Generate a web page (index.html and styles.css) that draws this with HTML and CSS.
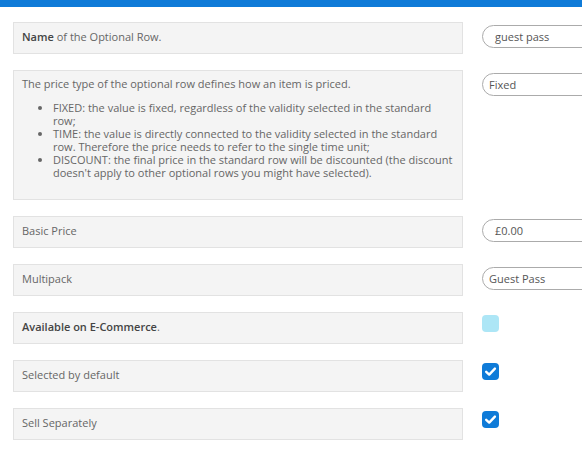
FILE: index.html
```
<!DOCTYPE html>
<html>
<head>
<meta charset="utf-8">
<link rel="stylesheet" href="styles.css">
</head>
<body>
<div class="topbar"></div>
<div class="form">
  <div class="row">
    <div class="label"><b>Name</b> of the Optional Row.</div>
    <div class="field"><div class="input text">guest pass</div></div>
  </div>
  <div class="row">
    <div class="label tall">
      <p>The price type of the optional row defines how an item is priced.</p>
      <ul>
        <li>FIXED: the value is fixed, regardless of the validity selected in the standard row;</li>
        <li>TIME: the value is directly connected to the validity selected in the standard row. Therefore the price needs to refer to the single time unit;</li>
        <li>DISCOUNT: the final price in the standard row will be discounted (the discount doesn't apply to other optional rows you might have selected).</li>
      </ul>
    </div>
    <div class="field"><div class="input select">Fixed</div></div>
  </div>
  <div class="row">
    <div class="label">Basic Price</div>
    <div class="field"><div class="input text">£0.00</div></div>
  </div>
  <div class="row">
    <div class="label">Multipack</div>
    <div class="field"><div class="input select">Guest Pass</div></div>
  </div>
  <div class="row">
    <div class="label"><b>Available on E-Commerce</b>.</div>
    <div class="field"><span class="check off"></span></div>
  </div>
  <div class="row">
    <div class="label">Selected by default</div>
    <div class="field"><span class="check on"><svg viewBox="0 0 17 17" width="17" height="17"><path d="M4.2 8.8 L7.2 11.6 L12.9 5.6" fill="none" stroke="#fff" stroke-width="2.4" stroke-linecap="round" stroke-linejoin="round"/></svg></span></div>
  </div>
  <div class="row">
    <div class="label">Sell Separately</div>
    <div class="field"><span class="check on"><svg viewBox="0 0 17 17" width="17" height="17"><path d="M4.2 8.8 L7.2 11.6 L12.9 5.6" fill="none" stroke="#fff" stroke-width="2.4" stroke-linecap="round" stroke-linejoin="round"/></svg></span></div>
  </div>
</div>
</body>
</html>
```
FILE: styles.css
```
html, body {
  margin: 0;
  padding: 0;
  background: #fff;
  overflow: hidden;
}
body {
  width: 582px;
  height: 458px;
  font-family: "Open Sans", "Liberation Sans", sans-serif;
  font-size: 11px;
  color: #666;
}
.topbar {
  height: 7px;
  background: #0f7bd8;
}
.form {
  display: flex;
  flex-direction: column;
  gap: 16px;
  padding: 15px 0 0 13px;
}
.row {
  display: grid;
  grid-template-columns: 450px 100px;
  column-gap: 19px;
  align-items: start;
}
.label {
  box-sizing: border-box;
  min-height: 32px;
  background: #f4f4f4;
  border: 1px solid #e2e2e2;
  padding: 6px 8px;
  line-height: 16px;
}
.label b {
  font-weight: 600;
  color: #444;
}
.label.tall {
  height: 130px;
  padding-top: 6px;
}
.label p {
  margin: 0 0 10px;
  line-height: 14px;
}
.label ul {
  margin: 0;
  padding-left: 31px;
  line-height: 13px;
}
.field {
  padding-top: 3px;
  overflow: hidden;
}
.input {
  box-sizing: border-box;
  width: 130px;
  height: 23px;
  border: 1px solid #ababab;
  border-radius: 12px;
  line-height: 21px;
  color: #555;
  white-space: nowrap;
}
.input.text {
  padding-left: 12px;
}
.input.select {
  padding-left: 6px;
}
.check {
  display: block;
  width: 17px;
  height: 17px;
  border-radius: 4px;
}
.check svg {
  display: block;
}
.check.off {
  background: #ade6f6;
}
.check.on {
  background: #0f7bd8;
}
```
